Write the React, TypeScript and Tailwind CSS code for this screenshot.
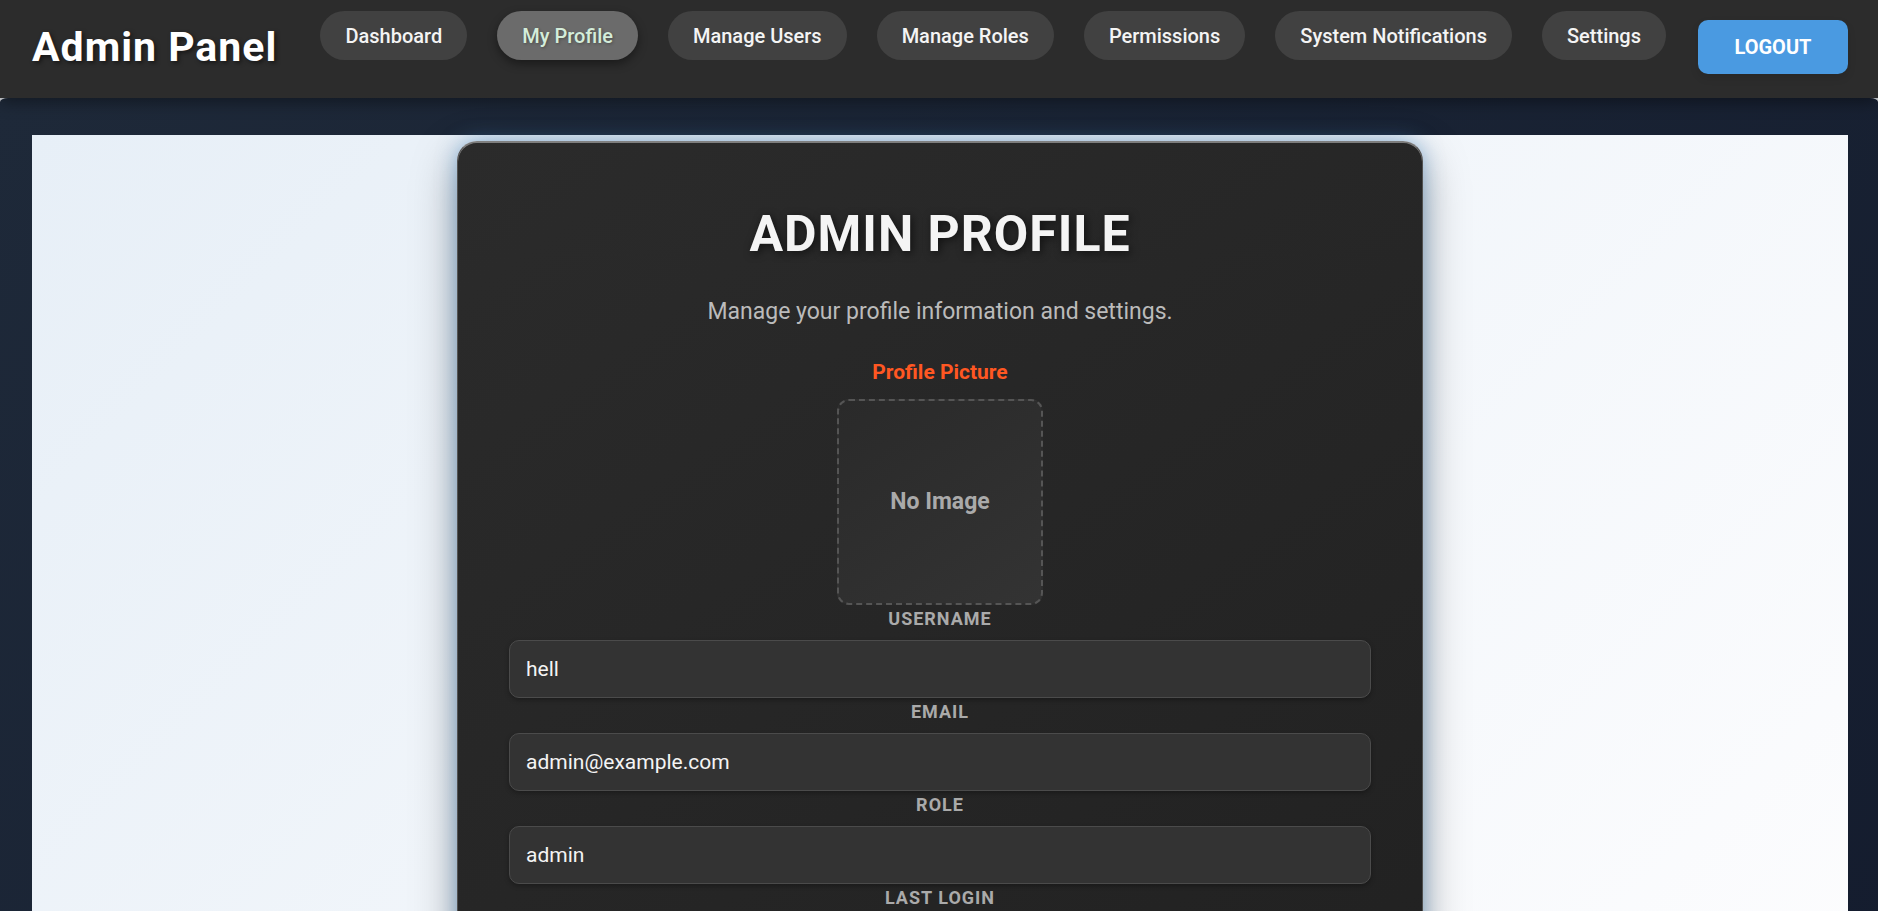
const navItems = [
  'Dashboard',
  'My Profile',
  'Manage Users',
  'Manage Roles',
  'Permissions',
  'System Notifications',
  'Settings',
];

const fields = [
  { id: 'username', label: 'Username', value: 'hell' },
  { id: 'email', label: 'Email', value: 'admin@example.com' },
  { id: 'role', label: 'Role', value: 'admin' },
  { id: 'last-login', label: 'Last Login', value: '' },
];

function Header() {
  return (
    <header className="relative z-10 flex h-[98px] items-start bg-[#2c2c2c] pl-8 pr-[30px] shadow-[0_4px_15px_rgba(0,0,0,0.4)]">
      <div className="mt-[23px] whitespace-nowrap text-[41px] font-bold leading-[48px] tracking-[1px] text-white [text-shadow:2px_2px_4px_rgba(0,0,0,0.5)]">
        Admin Panel
      </div>
      <nav className="mr-8 mt-[11px] flex grow justify-end gap-[30px]">
        {navItems.map((item) => (
          <a
            key={item}
            href="#"
            className={
              item === 'My Profile'
                ? 'flex h-[49px] items-center whitespace-nowrap rounded-[25px] bg-[#6b6b6b] px-[25px] text-[20px] font-medium text-[#d4edda] shadow-[0_4px_10px_rgba(0,0,0,0.4)] [text-shadow:1px_1px_3px_rgba(0,0,0,0.3)]'
                : 'flex h-[49px] items-center whitespace-nowrap rounded-[25px] bg-[#414141] px-[25px] text-[20px] font-medium text-[#f4f4f4]'
            }
          >
            {item}
          </a>
        ))}
      </nav>
      <button
        type="button"
        className="mt-5 h-[54px] w-[150px] rounded-[10px] bg-[#4a9ae1] text-[20px] font-bold uppercase text-white shadow-[0_4px_8px_rgba(0,0,0,0.1)]"
      >
        Logout
      </button>
    </header>
  );
}

function ProfileCard() {
  return (
    <section className="w-full max-w-[966px] rounded-[20px] border border-white/20 border-t-white/40 bg-[linear-gradient(145deg,#2b2b2b,#212121)] bg-origin-border px-[51px] pt-16 pb-16 text-center shadow-[0_15px_45px_rgba(0,0,0,0.35),0_0_20px_rgba(74,154,225,0.5),inset_0_1px_0_rgba(255,255,255,0.4)]">
      <h1 className="text-[50px] font-bold uppercase leading-[56px] tracking-[1px] text-[#f4f4f4] [text-shadow:2px_2px_8px_rgba(0,0,0,0.6)]">
        Admin Profile
      </h1>
      <p className="mt-[34px] text-[23px] leading-[32px] text-[#bbbbbb]">
        Manage your profile information and settings.
      </p>
      <h2 className="mt-7 text-[21px] font-bold leading-[32px] text-[#ff5722]">Profile Picture</h2>
      <div className="mx-auto mt-[11px] flex size-[206px] items-center justify-center rounded-[12px] border-2 border-dashed border-[#555] bg-[linear-gradient(145deg,#2a2a2a,#333)] text-[23px] font-bold text-[#aaa]">
        No Image
      </div>
      <form>
        {fields.map((field) => (
          <div key={field.id}>
            <label
              htmlFor={field.id}
              className="block h-[35px] pt-px text-[18px] font-bold uppercase leading-[26px] tracking-[1px] text-[#aaa]"
            >
              {field.label}
            </label>
            <input
              id={field.id}
              readOnly
              defaultValue={field.value}
              className="block h-[58px] w-full rounded-[10px] border border-[#4b4b4b] bg-[#333] px-4 text-[21px] text-[#f4f4f4] shadow-[0_2px_5px_rgba(0,0,0,0.3)] outline-none"
            />
          </div>
        ))}
      </form>
    </section>
  );
}

export default function App() {
  return (
    <div className="h-screen overflow-hidden bg-[#d5d8dc] font-[Roboto,sans-serif]">
      <Header />
      <main className="bg-[linear-gradient(135deg,#1e2939,#141c2e)] pt-[37px] pl-8 pr-[30px] [border-radius:8px_8px_0_0/4px_4px_0_0]">
        <div className="flex justify-center bg-[linear-gradient(135deg,#e7eff7,#fdfdfe)] pt-[6px] pb-8">
          <ProfileCard />
        </div>
      </main>
    </div>
  );
}
